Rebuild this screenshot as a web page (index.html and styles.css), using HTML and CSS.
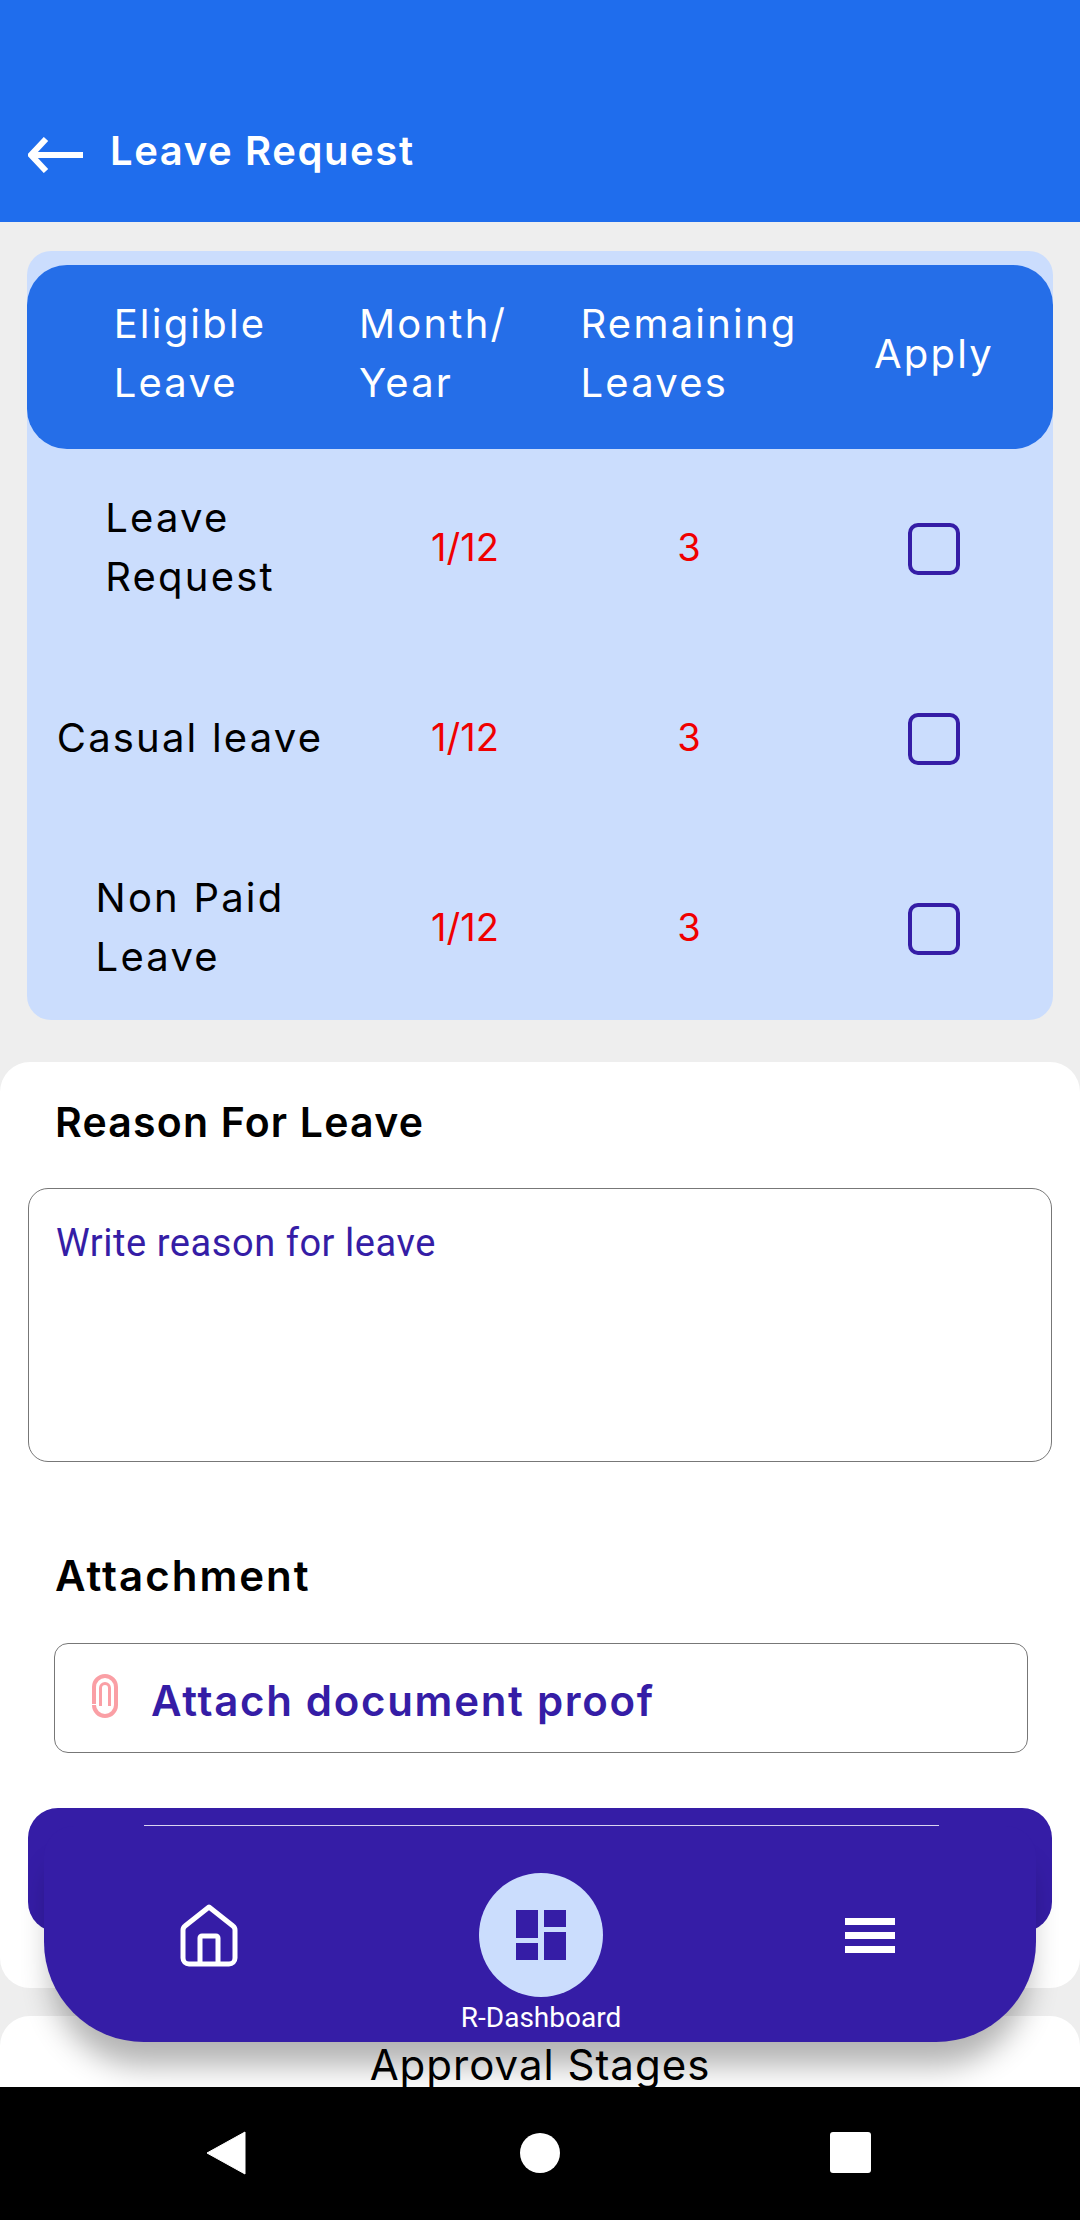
FILE: index.html
```html
<!DOCTYPE html>
<html lang="en">
<head>
    <meta charset="UTF-8">
    <meta name="viewport" content="width=device-width, initial-scale=1.0">
    <title>Leave Request</title>
    <link rel="stylesheet" href="styles.css">
</head>
<body>
    <div class="screen">
        <div class="content">
            <header class="topbar">
                <svg class="back" width="56" height="36" viewBox="0 0 56 36"><path d="M55 18H4M18 2 3 18l15 16" fill="none" stroke="#fff" stroke-width="6"/></svg>
                <h1>Leave Request</h1>
            </header>

            <section class="leave-panel">
                <div class="leave-head">
                    <div class="cell"><span>Eligible<br>Leave</span></div>
                    <div class="cell month"><span>Month/<br>Year</span></div>
                    <div class="cell"><span>Remaining<br>Leaves</span></div>
                    <div class="cell"><span>Apply</span></div>
                </div>
                <div class="leave-row">
                    <div class="cell"><span>Leave<br>Request</span></div>
                    <div class="cell red">1/12</div>
                    <div class="cell red">3</div>
                    <div class="cell"><i class="check"></i></div>
                </div>
                <div class="leave-row">
                    <div class="cell"><span>Casual leave</span></div>
                    <div class="cell red">1/12</div>
                    <div class="cell red">3</div>
                    <div class="cell"><i class="check"></i></div>
                </div>
                <div class="leave-row">
                    <div class="cell"><span>Non Paid<br>Leave</span></div>
                    <div class="cell red">1/12</div>
                    <div class="cell red">3</div>
                    <div class="cell"><i class="check"></i></div>
                </div>
            </section>

            <section class="card form-card">
                <h2>Reason For Leave</h2>
                <div class="reason">Write reason for leave</div>
                <h2 class="attach-title">Attachment</h2>
                <div class="attach">
                    <svg width="30" height="44" viewBox="0 0 30 44"><path d="M4 30V13a11 11 0 0 1 22 0v18a11 11 0 0 1-22 0" fill="none" stroke="#fa9fa5" stroke-width="4"/><path d="M10.500 32V14a4.500 4.500 0 0 1 9 0v18" fill="none" stroke="#fa9fa5" stroke-width="3"/></svg>
                    <span>Attach document proof</span>
                </div>
                <div class="submit"></div>
            </section>

            <section class="card stages-card">
                <h3>Approval Stages</h3>
            </section>
        </div>

        <nav class="bottom-nav">
            <div class="nav-line"></div>
            <svg class="nav-home" width="58" height="64" viewBox="0 0 58 64"><path d="M29 3 5 22q-2 1.500-2 4v28a6 6 0 0 0 6 6h40a6 6 0 0 0 6-6V26q0-2.500-2-4ZM20 60V34a2 2 0 0 1 2-2h14a2 2 0 0 1 2 2v26" fill="none" stroke="#fff" stroke-width="5" stroke-linejoin="round"/></svg>
            <div class="nav-mid">
                <div class="nav-circle">
                    <svg width="50" height="50" viewBox="0 0 50 50"><path d="M0 0h22v28H0zM28 0h22v17H28zM28 22h22v28H28zM0 33h22v17H0z" fill="#351da6"/></svg>
                </div>
                <div class="nav-label">R-Dashboard</div>
            </div>
            <div class="nav-menu"><i></i><i></i><i></i></div>
        </nav>

        <footer class="sysbar">
            <svg width="40" height="44" viewBox="0 0 40 44"><path d="M39 1v42L1 22Z" fill="#fff" stroke="#fff" stroke-linejoin="round"/></svg>
            <i class="sys-dot"></i>
            <i class="sys-square"></i>
        </footer>
    </div>
</body>
</html>
```

FILE: styles.css
```css
* {
    box-sizing: border-box;
}
body {
    margin: 0;
    font-family: Inter, sans-serif;
    background: #eeeeee;
}
.screen {
    position: relative;
    width: 1080px;
    height: 2220px;
    overflow: hidden;
    display: flex;
    flex-direction: column;
}
.content {
    height: 2087px;
    flex: none;
    overflow: hidden;
}
.topbar {
    height: 222px;
    background: #1f6ded;
    color: white;
    display: flex;
    align-items: flex-start;
    padding: 129px 0 0 28px;
}
.back {
    margin-top: 8px;
}
.topbar h1 {
    margin: 0 0 0 26px;
    font-size: 40px;
    line-height: 44px;
    font-weight: 600;
    letter-spacing: 1.6px;
}
.leave-panel {
    margin: 29px 27px 0 27px;
    height: 769px;
    padding-top: 14px;
    background: #cbddfd;
    border-radius: 24px;
    font-size: 40px;
    line-height: 59px;
}
.leave-head, .leave-row {
    display: grid;
    grid-template-columns: 326px 224px 224px 252px;
}
.leave-head {
    height: 184px;
    padding-bottom: 8px;
    background: #256ee8;
    border-radius: 40px;
    color: white;
    margin-bottom: 3px;
}
.leave-row {
    height: 190px;
    color: black;
}
.cell {
    display: flex;
    align-items: center;
    justify-content: center;
    letter-spacing: 2.2px;
}
.cell:last-child {
    padding-left: 14px;
}
.month {
    justify-content: flex-start;
    padding-left: 6px;
}
.red {
    color: #f00000;
    font-size: 38px;
    letter-spacing: 0;
}
.check {
    width: 52px;
    height: 52px;
    margin-top: 4px;
    border: 4px solid #351da6;
    border-radius: 10px;
}
.card {
    background: white;
    border-radius: 30px;
}
.form-card {
    margin-top: 42px;
    height: 926px;
    padding: 30px 28px 0 28px;
}
.card h2 {
    margin: 0;
    padding-left: 27px;
    font-size: 41px;
    line-height: 60px;
    font-weight: 600;
    color: black;
    letter-spacing: 1.2px;
}
.reason {
    margin-top: 36px;
    height: 274px;
    padding: 30px 27px;
    border: 1px solid #777777;
    border-radius: 20px;
    font-family: Roboto, sans-serif;
    font-size: 38px;
    line-height: 48px;
    letter-spacing: 0.55px;
    color: #351da6;
}
.card .attach-title {
    margin-top: 84px;
    font-size: 42px;
    letter-spacing: 2px;
}
.attach {
    margin: 37px 24px 0 26px;
    height: 110px;
    display: flex;
    align-items: center;
    gap: 31px;
    padding: 4px 0 0 35px;
    border: 1px solid #777777;
    border-radius: 14px;
    font-size: 42px;
    font-weight: 600;
    letter-spacing: 1.7px;
    color: #351da6;
}
.attach svg {
    margin-top: -8px;
}
.submit {
    margin-top: 55px;
    height: 124px;
    background: #351da6;
    border-radius: 30px;
}
.stages-card {
    margin-top: 28px;
    height: 200px;
    text-align: center;
}
.stages-card h3 {
    margin: 0;
    padding-top: 23px;
    font-size: 42px;
    line-height: 52px;
    font-weight: 400;
    letter-spacing: 1px;
    color: black;
}
.bottom-nav {
    position: absolute;
    left: 44px;
    top: 1826px;
    width: 992px;
    height: 216px;
    background: #351da6;
    border-radius: 30px 30px 100px 100px;
    box-shadow: 0 32px 30px -8px rgba(0, 0, 0, 0.3);
}
.nav-line {
    position: absolute;
    left: 100px;
    top: -1px;
    width: 795px;
    height: 1px;
    background: #d9d4f0;
}
.nav-home {
    position: absolute;
    left: 136px;
    top: 78px;
}
.nav-mid {
    position: absolute;
    left: 397px;
    top: 47px;
    width: 200px;
    display: flex;
    flex-direction: column;
    align-items: center;
}
.nav-circle {
    width: 124px;
    height: 124px;
    border-radius: 50%;
    background: #cbddfd;
    display: flex;
    align-items: center;
    justify-content: center;
}
.nav-label {
    margin-top: 3px;
    font-family: Roboto, sans-serif;
    font-size: 28px;
    line-height: 36px;
    color: white;
}
.nav-menu {
    position: absolute;
    left: 801px;
    top: 92px;
    width: 50px;
    display: flex;
    flex-direction: column;
    gap: 7px;
}
.nav-menu i {
    display: block;
    height: 7px;
    background: white;
}
.sysbar {
    height: 133px;
    flex: none;
    background: black;
    position: relative;
    z-index: 2;
    display: flex;
    align-items: center;
    padding: 0 0 2px 206px;
}
.sys-dot {
    width: 40px;
    height: 40px;
    margin-left: 274px;
    border-radius: 50%;
    background: white;
}
.sys-square {
    width: 41px;
    height: 41px;
    margin-left: 270px;
    border-radius: 3px;
    background: white;
}
```
